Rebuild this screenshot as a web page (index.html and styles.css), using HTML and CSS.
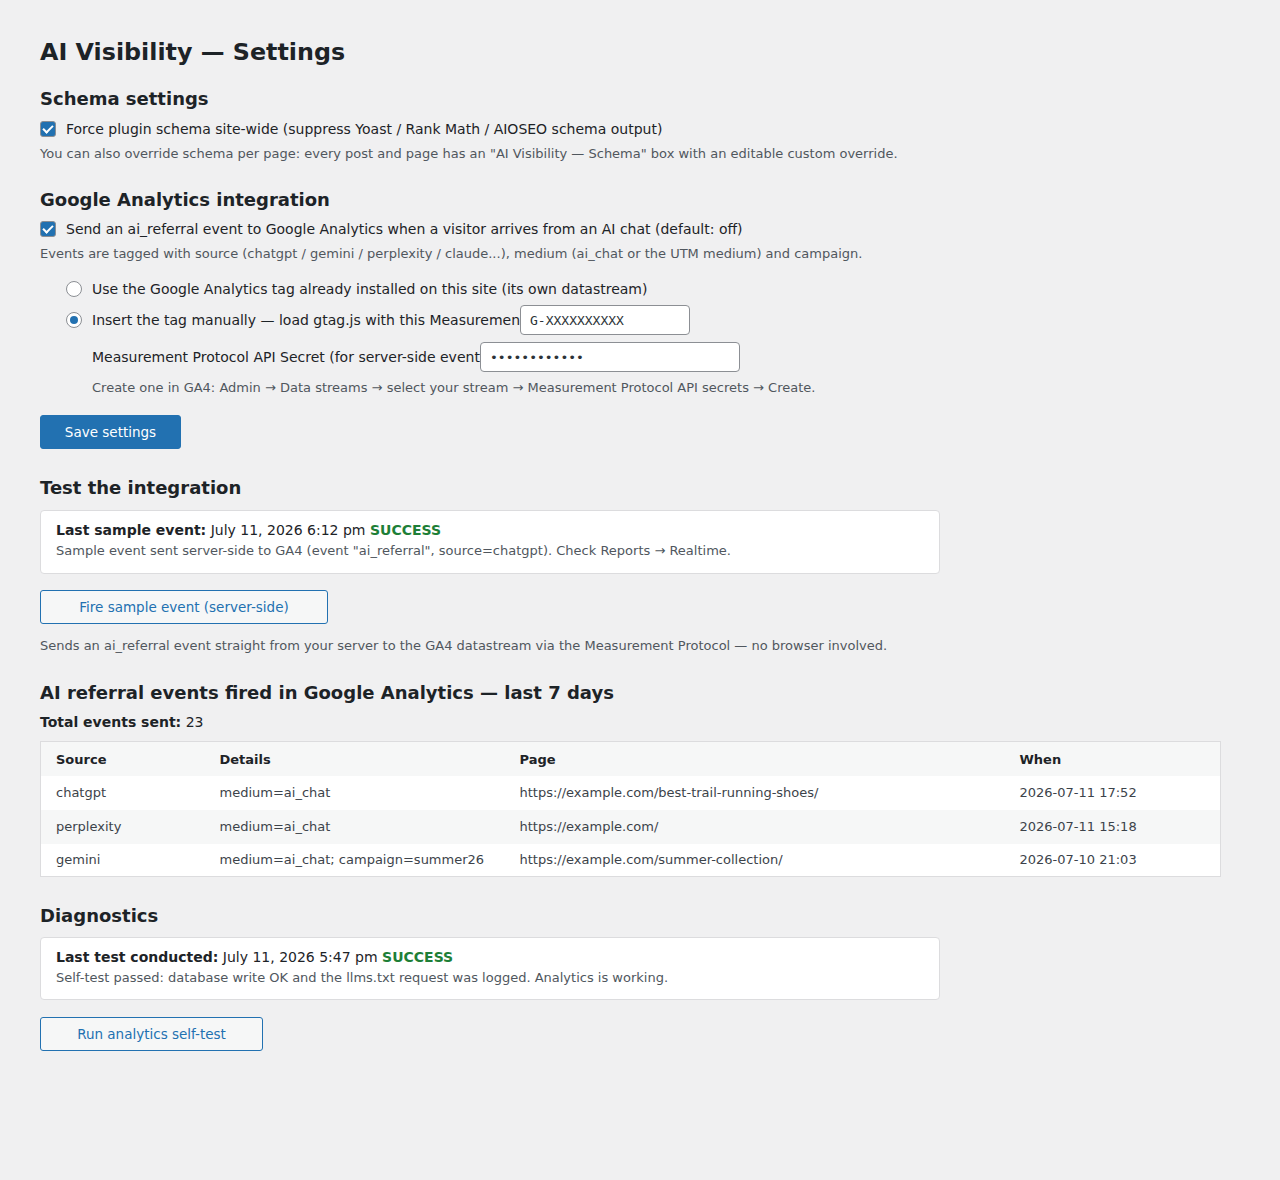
FILE: index.html
```html
<!DOCTYPE html>
<html lang="en">
<head>
<meta charset="utf-8">
<title>AI Visibility — Settings</title>
<link rel="stylesheet" href="styles.css">
</head>
<body>
<div class="wrap">
  <h1 class="page-title">AI Visibility — Settings</h1>

  <h2 class="section-title first">Schema settings</h2>
  <label class="check-row first-check"><input type="checkbox" class="cb" checked><span>Force plugin schema site-wide (suppress Yoast / Rank Math / AIOSEO schema output)</span></label>
  <p class="description">You can also override schema per page: every post and page has an "AI Visibility — Schema" box with an editable custom override.</p>

  <h2 class="section-title ga-title">Google Analytics integration</h2>
  <label class="check-row"><input type="checkbox" class="cb" checked><span>Send an ai_referral event to Google Analytics when a visitor arrives from an AI chat (default: off)</span></label>
  <p class="description">Events are tagged with source (chatgpt / gemini / perplexity / claude...), medium (ai_chat or the UTM medium) and campaign.</p>

  <div class="ga-options">
    <label class="radio-row"><input type="radio" name="mode" class="rd"><span>Use the Google Analytics tag already installed on this site (its own datastream)</span></label>
    <div class="field-row">
      <input type="radio" name="mode" class="rd" checked>
      <span class="clip-label w-mid">Insert the tag manually — load gtag.js with this Measurement ID:</span>
      <input type="text" class="text-input mid" value="G-XXXXXXXXXX">
    </div>
    <div class="field-row indent">
      <span class="clip-label w-secret">Measurement Protocol API Secret (for server-side events):</span>
      <input type="password" class="text-input secret" value="abcdefghijkl">
    </div>
    <p class="description indent help">Create one in GA4: Admin → Data streams → select your stream → Measurement Protocol API secrets → Create.</p>
  </div>

  <button class="btn btn-primary">Save settings</button>

  <h2 class="section-title">Test the integration</h2>
  <div class="card">
    <p class="card-main"><strong>Last sample event:</strong> July 11, 2026 6:12 pm <span class="ok">SUCCESS</span></p>
    <p class="card-sub">Sample event sent server-side to GA4 (event "ai_referral", source=chatgpt). Check Reports → Realtime.</p>
  </div>
  <button class="btn btn-secondary btn-fire">Fire sample event (server-side)</button>
  <p class="description after-btn">Sends an ai_referral event straight from your server to the GA4 datastream via the Measurement Protocol — no browser involved.</p>

  <h2 class="section-title events-title">AI referral events fired in Google Analytics — last 7 days</h2>
  <p class="total"><strong>Total events sent:</strong> 23</p>
  <table class="events">
    <thead>
      <tr><th class="c-src">Source</th><th class="c-det">Details</th><th class="c-page">Page</th><th class="c-when">When</th></tr>
    </thead>
    <tbody>
      <tr><td>chatgpt</td><td>medium=ai_chat</td><td>https://example.com/best-trail-running-shoes/</td><td>2026-07-11 17:52</td></tr>
      <tr class="alt"><td>perplexity</td><td>medium=ai_chat</td><td>https://example.com/</td><td>2026-07-11 15:18</td></tr>
      <tr class="last"><td>gemini</td><td>medium=ai_chat; campaign=summer26</td><td>https://example.com/summer-collection/</td><td>2026-07-10 21:03</td></tr>
    </tbody>
  </table>

  <h2 class="section-title">Diagnostics</h2>
  <div class="card card-diag">
    <p class="card-main"><strong>Last test conducted:</strong> July 11, 2026 5:47 pm <span class="ok">SUCCESS</span></p>
    <p class="card-sub">Self-test passed: database write OK and the llms.txt request was logged. Analytics is working.</p>
  </div>
  <button class="btn btn-secondary btn-self">Run analytics self-test</button>
</div>
</body>
</html>
```

FILE: styles.css
```css
html, body {
  margin: 0;
  padding: 0;
  background: #f0f0f1;
}
body {
  font-family: "DejaVu Sans", "Noto Sans", sans-serif;
  color: #1d2327;
  font-size: 14px;
  line-height: 20px;
}
.wrap {
  padding: 38px 40px 60px 40px;
  display: flex;
  flex-direction: column;
  align-items: flex-start;
}
.page-title {
  font-size: 23.8px;
  font-weight: 700;
  line-height: 29px;
  margin: 0;
}
.section-title {
  font-size: 18px;
  font-weight: 700;
  line-height: 22px;
  margin: 28px 0 0 0;
}
.section-title.first {
  margin-top: 21px;
}
.section-title.ga-title {
  margin-top: 26px;
}
.section-title.events-title {
  margin-top: 27px;
}
.check-row {
  display: flex;
  align-items: center;
  gap: 10px;
  margin-top: 8px;
  height: 20px;
}
.check-row.first-check {
  margin-top: 9px;
}
.cb {
  appearance: none;
  -webkit-appearance: none;
  margin: 0;
  width: 16px;
  height: 16px;
  border-radius: 3px;
  border: 1px solid #8c8f94;
  background: #2271b1;
  box-sizing: border-box;
  position: relative;
  flex: none;
}
.cb:checked::after {
  content: "";
  position: absolute;
  left: 4px;
  top: 1px;
  width: 4px;
  height: 8px;
  border: solid #fff;
  border-width: 0 2px 2px 0;
  transform: rotate(45deg);
}
.description {
  margin: 6px 0 0 0;
  font-size: 13px;
  line-height: 18px;
  color: #50575e;
}
.ga-options {
  margin: 16px 0 0 26px;
  display: flex;
  flex-direction: column;
}
.radio-row {
  display: flex;
  align-items: center;
  gap: 10px;
  height: 20px;
}
.field-row {
  display: flex;
  align-items: center;
  height: 30px;
  margin-top: 6px;
}
.field-row .rd {
  margin-right: 10px;
}
.indent {
  margin-left: 26px;
}
.field-row.indent {
  margin-top: 7px;
}
.rd {
  appearance: none;
  -webkit-appearance: none;
  margin: 0;
  width: 16px;
  height: 16px;
  border-radius: 50%;
  border: 1px solid #8c8f94;
  background: #fff;
  box-sizing: border-box;
  position: relative;
  flex: none;
}
.rd:checked::after {
  content: "";
  position: absolute;
  left: 3px;
  top: 3px;
  width: 8px;
  height: 8px;
  border-radius: 50%;
  background: #2271b1;
}
.clip-label {
  white-space: nowrap;
  overflow: hidden;
  flex: none;
}
.w-mid { width: 428px; }
.w-secret { width: 388px; }
.text-input {
  box-sizing: border-box;
  height: 30px;
  border: 1px solid #8c8f94;
  border-radius: 4px;
  background: #fff;
  padding: 0 9px;
  font-family: "DejaVu Sans Mono", "Liberation Mono", monospace;
  font-size: 13px;
  color: #2c3338;
  margin: 0;
  flex: none;
}
.text-input.mid { width: 170px; }
.text-input.secret { width: 260px; }
.help {
  margin-top: 7px;
}
.btn {
  box-sizing: border-box;
  height: 34px;
  border-radius: 3px;
  font-family: "DejaVu Sans", sans-serif;
  font-size: 13.5px;
  line-height: 32px;
  cursor: pointer;
}
.btn-primary {
  margin-top: 18px;
  background: #2271b1;
  border: 1px solid #2271b1;
  color: #fff;
  width: 141px;
  padding: 0;
}
.btn-secondary {
  margin-top: 16px;
  background: #f6f7f7;
  border: 1px solid #2271b1;
  color: #2271b1;
  padding: 0;
}
.btn-fire { width: 288px; }
.btn-self { width: 223px; margin-top: 17px; }
.card {
  margin-top: 11px;
  box-sizing: border-box;
  width: 900px;
  background: #fff;
  border: 1px solid #dcdcde;
  border-radius: 4px;
  padding: 9px 15px 13px 15px;
}
.card-diag {
  margin-top: 10px;
  padding-bottom: 12px;
}
.card p { margin: 0; }
.card-main {
  font-size: 14px;
  line-height: 20px;
}
.card-sub {
  margin-top: 2px !important;
  font-size: 13px;
  line-height: 18px;
  color: #50575e;
}
.ok {
  color: #1e7f37;
  font-weight: 700;
}
.after-btn {
  margin-top: 13px;
}
.total {
  margin: 8px 0 0 0;
  font-size: 14px;
  line-height: 20px;
}
.events {
  margin-top: 9px;
  width: 1180px;
  border-collapse: collapse;
  border: 1px solid #dcdcde;
  background: #fff;
  font-size: 13px;
  table-layout: fixed;
}
.events th, .events td {
  text-align: left;
  height: 34px;
  padding: 0 15px;
  box-sizing: border-box;
  white-space: nowrap;
}
.events tr.last td {
  height: 33px;
}
.events th {
  font-weight: 700;
  background: #f6f7f7;
  color: #1d2327;
  padding-top: 2px;
}
.events td {
  color: #3c434a;
}
.events tr.alt td { background: #f6f7f7; }
.c-src { width: 164px; }
.c-det { width: 300px; }
.c-page { width: 500px; }
.c-when { width: 216px; }
```
